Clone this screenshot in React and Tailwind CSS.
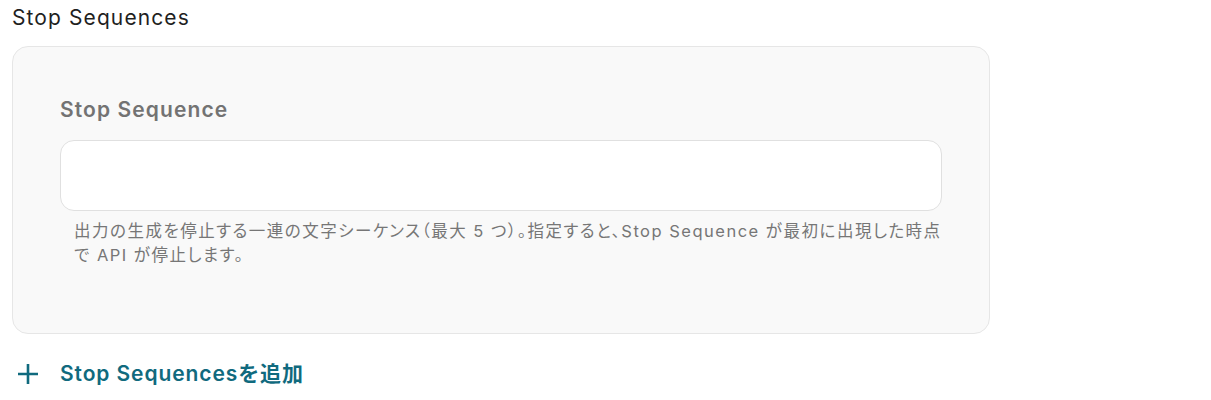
import React from 'react';

const FONT = { fontFamily: 'Inter, "Noto Sans CJK JP", sans-serif' };

export default function App() {
  return (
    <div className="w-[1211px] h-[400px] bg-white pl-[12px] pt-[3px]" style={FONT}>
      <h2 className="text-[21px] leading-[30px] tracking-[1.1px] text-[#1f1f1f] font-normal">Stop Sequences</h2>

      <div className="mt-[13px] w-[978px] h-[288px] rounded-[16px] border border-[#e6e6e6] bg-[#f9f9f9] pl-[47px] pr-[47px] pt-[49px]">
        <div className="text-[21px] leading-[28px] tracking-[1.1px] font-semibold text-[#737373]">Stop Sequence</div>
        <div className="mt-[16px] h-[71px] rounded-[14px] border border-[#e0e0e0] bg-white" />
        <p className="mt-[8px] pl-[14px] text-[16.5px] leading-[24px] tracking-[1.5px] text-[#767676] [font-feature-settings:'palt']">
          出力の生成を停止する一連の文字シーケンス（最大 5 つ）。指定すると、Stop Sequence が最初に出現した時点で API が停止します。
        </p>
      </div>

      <button className="mt-[26px] flex items-center gap-[22px] text-[#106a7e]">
        <svg width="20" height="20" viewBox="0 0 20 20" className="ml-[6px]">
          <path d="M10 0V20M0 10H20" stroke="currentColor" strokeWidth="2.6" fill="none" />
        </svg>
        <span className="text-[21px] leading-[28px] tracking-[0.9px] font-semibold">Stop Sequencesを追加</span>
      </button>
    </div>
  );
}
